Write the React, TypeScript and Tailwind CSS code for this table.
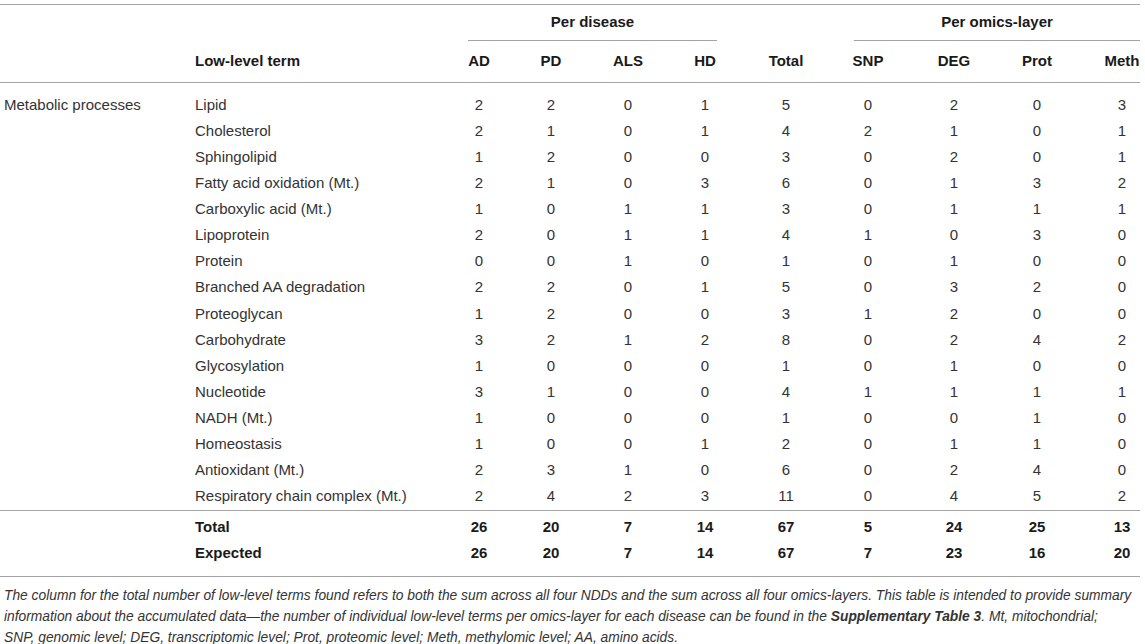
const grid =
  "grid grid-cols-[191px_249px_78px_66px_88px_66px_96px_68px_104px_62px_72px]";

type Row = [string, number[]];

const rows: Row[] = [
  ["Lipid", [2, 2, 0, 1, 5, 0, 2, 0, 3]],
  ["Cholesterol", [2, 1, 0, 1, 4, 2, 1, 0, 1]],
  ["Sphingolipid", [1, 2, 0, 0, 3, 0, 2, 0, 1]],
  ["Fatty acid oxidation (Mt.)", [2, 1, 0, 3, 6, 0, 1, 3, 2]],
  ["Carboxylic acid (Mt.)", [1, 0, 1, 1, 3, 0, 1, 1, 1]],
  ["Lipoprotein", [2, 0, 1, 1, 4, 1, 0, 3, 0]],
  ["Protein", [0, 0, 1, 0, 1, 0, 1, 0, 0]],
  ["Branched AA degradation", [2, 2, 0, 1, 5, 0, 3, 2, 0]],
  ["Proteoglycan", [1, 2, 0, 0, 3, 1, 2, 0, 0]],
  ["Carbohydrate", [3, 2, 1, 2, 8, 0, 2, 4, 2]],
  ["Glycosylation", [1, 0, 0, 0, 1, 0, 1, 0, 0]],
  ["Nucleotide", [3, 1, 0, 0, 4, 1, 1, 1, 1]],
  ["NADH (Mt.)", [1, 0, 0, 0, 1, 0, 0, 1, 0]],
  ["Homeostasis", [1, 0, 0, 1, 2, 0, 1, 1, 0]],
  ["Antioxidant (Mt.)", [2, 3, 1, 0, 6, 0, 2, 4, 0]],
  ["Respiratory chain complex (Mt.)", [2, 4, 2, 3, 11, 0, 4, 5, 2]],
];

const totals: Row[] = [
  ["Total", [26, 20, 7, 14, 67, 5, 24, 25, 13]],
  ["Expected", [26, 20, 7, 14, 67, 7, 23, 16, 20]],
];

const headers = ["AD", "PD", "ALS", "HD", "Total", "SNP", "DEG", "Prot", "Meth"];

// last column sits a bit right of its cell centre in the source table
const cellClass = (i: number) =>
  i === 8 ? "text-center pl-[36px]" : "text-center";

const App = () => {
  return (
    <div className="w-[1145px] h-[644px] bg-white overflow-hidden font-['Liberation_Sans',Arial,sans-serif] text-[#333]">
      <div className="w-[1140px] mt-[4px] border-t border-[#a3a3a3]">
        {/* group headings */}
        <div className={`${grid} h-[36px] text-[15px] font-bold text-[#1a1a1a]`}>
          <div className="col-start-3 col-span-4 ml-[28px] mr-[21px] border-b border-[#a3a3a3] flex items-center justify-center">
            Per disease
          </div>
          <div className="col-start-8 col-span-4 ml-[20px] border-b border-[#a3a3a3] flex items-center justify-center">
            Per omics-layer
          </div>
        </div>

        {/* column headings */}
        <div className={`${grid} h-[42px] items-center border-b border-[#a3a3a3] text-[15px] font-bold text-[#1a1a1a]`}>
          <div />
          <div className="pl-[4px]">Low-level term</div>
          {headers.map((h, i) => (
            <div key={h} className={cellClass(i)}>
              {h}
            </div>
          ))}
        </div>

        {/* body */}
        <div className="pt-[9px] border-b border-[#a3a3a3] text-[15px]">
          {rows.map(([term, vals], r) => (
            <div key={term} className={`${grid} h-[26.1px] items-center`}>
              <div className="pl-[4px] whitespace-nowrap">
                {r === 0 ? "Metabolic processes" : ""}
              </div>
              <div className="pl-[4px] whitespace-nowrap">{term}</div>
              {vals.map((v, i) => (
                <div key={i} className={cellClass(i)}>
                  {v}
                </div>
              ))}
            </div>
          ))}
        </div>

        <div className="pt-[4px] pb-[9px] border-b border-[#a3a3a3] text-[15px] font-bold text-[#1a1a1a]">
          {totals.map(([term, vals]) => (
            <div key={term} className={`${grid} h-[26px] items-center`}>
              <div />
              <div className="pl-[4px]">{term}</div>
              {vals.map((v, i) => (
                <div key={i} className={cellClass(i)}>
                  {v}
                </div>
              ))}
            </div>
          ))}
        </div>

        {/* caption */}
        <p className="pt-[8px] pl-[4px] text-[13.8px] leading-[21px] italic text-[#333] whitespace-nowrap">
          The column for the total number of low-level terms found refers to both the sum across all four NDDs and the sum across all four omics-layers. This table is intended to provide summary
          <br />
          information about the accumulated data—the number of individual low-level terms per omics-layer for each disease can be found in the{" "}
          <span className="font-bold">Supplementary Table 3</span>. Mt, mitochondrial;
          <br />
          SNP, genomic level; DEG, transcriptomic level; Prot, proteomic level; Meth, methylomic level; AA, amino acids.
        </p>
      </div>
    </div>
  );
};

export default App;
